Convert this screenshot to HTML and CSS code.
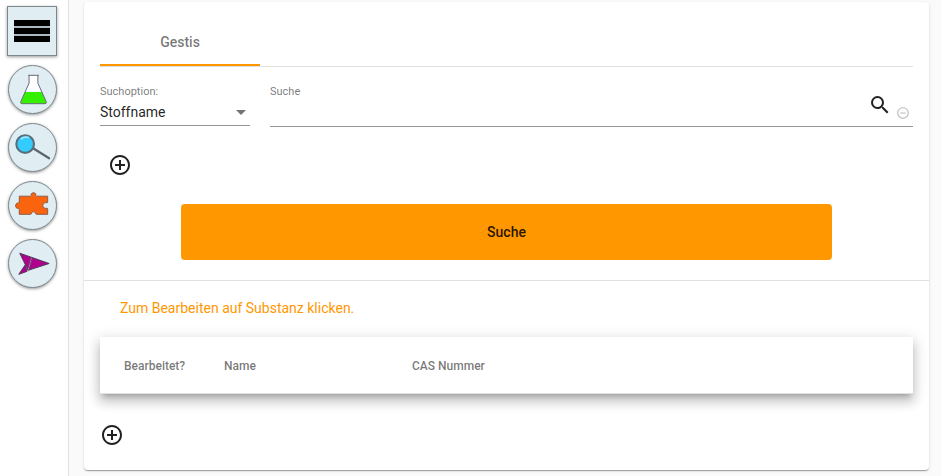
FILE: index.html
```html
<!DOCTYPE html>
<html lang="de">
<head>
<meta charset="utf-8">
<meta name="viewport" content="width=device-width, initial-scale=1">
<title>Gestis</title>
<link rel="stylesheet" href="styles.css">
</head>
<body>
<nav class="sidebar" aria-label="Navigation">
  <button class="nav-button nav-menu" type="button" aria-label="Menü">
    <svg viewBox="0 0 48 48"><path fill="#a9b9bf" d="M6 13h36v22H6z"/><path d="M6 13h36v6H6zM6 21h36v6H6zM6 29h36v6H6z"/></svg>
  </button>
  <button class="nav-button" type="button" aria-label="Substanzen">
    <svg viewBox="0 0 48 48"><path fill="#fff" d="M20.500 9.500h9v8l3.500 8.500H17l3.500-8.500z"/><path fill="#33f000" d="M16.500 26.500h17l4.500 10q.5 2-1.500 2h-23q-2 0-1.500-2z"/><path fill="none" stroke="#667" d="M19.500 9.500h11M20.500 9.500v8l-8.500 19q-.5 2 1.500 2h23q2 0 1.500-2l-8.500-19v-8"/></svg>
  </button>
  <button class="nav-button" type="button" aria-label="Suchen">
    <svg viewBox="0 0 48 48"><path stroke="#59656a" stroke-width="2.200" stroke-linecap="round" d="M25 25 41 35"/><circle cx="16.500" cy="20.500" r="9" fill="#3cf" stroke="#59707c" stroke-width="2.200"/><path fill="none" stroke="#a5e9ff" stroke-width="1.500" d="M12 15.500q4-3.500 8.500-1.500"/></svg>
  </button>
  <button class="nav-button" type="button" aria-label="Erweiterungen">
    <svg viewBox="0 0 48 48"><path fill="#fa640f" stroke="#8a5b42" d="M10.500 14.500h11.500q1.500-.5.500-2a2.800 2.800 0 0 1 5 0q-1 1.500.5 2h11.500v6q-.5 1.500-2 .500a3 3 0 0 0 0 6q1.500-1 2 .500v5.500H28q-1.500-.5-1-1.500a2.500 2.500 0 0 0-4 0q.5 1-1 1.500H10.500v-5.500q-.5-1-2-.500a3 3 0 0 1 0-5.500q1.500.5 2-1z"/></svg>
  </button>
  <button class="nav-button" type="button" aria-label="Senden">
    <svg viewBox="0 0 48 48"><path fill="#b0008e" stroke="#4b3855" stroke-linejoin="round" d="M11 13.500 41 24 19.500 31zM16.500 25.500 10 35l8.500-3z"/><path stroke="#d06bbd" stroke-width="1" d="m23 18.500-3.500 12.500"/><path stroke="#604060" stroke-width=".8" d="m24 18.500-3.500 12.500M22 18l-3.500 12.500"/></svg>
  </button>
</nav>
<main class="content">
  <div class="card">
    <form class="search-form">
      <div class="tabs" role="tablist">
        <button class="tab" type="button" role="tab" aria-selected="true">Gestis</button>
      </div>
      <div class="fields">
        <div class="field field-option">
          <label for="option">Suchoption:</label>
          <select id="option"><option>Stoffname</option></select>
        </div>
        <div class="field field-query">
          <label for="query">Suche</label>
          <div class="query-row">
            <input id="query" type="text">
            <button class="icon-button query-search" type="submit" aria-label="Suchen"><svg viewBox="0 0 24 24"><path d="M15.500 14h-.79l-.28-.27A6.470 6.470 0 0 0 16 9.500 6.500 6.500 0 1 0 9.500 16c1.610 0 3.090-.59 4.230-1.570l.27.28v.79l5 4.990L20.490 19l-4.990-5zm-6 0C7.010 14 5 11.990 5 9.500S7.010 5 9.500 5 14 7.010 14 9.500 11.990 14 9.500 14z"/></svg></button>
            <button class="icon-button query-remove" type="button" aria-label="Entfernen"><svg viewBox="0 0 24 24"><path d="M7 11v2h10v-2H7zm5-9C6.480 2 2 6.480 2 12s4.480 10 10 10 10-4.480 10-10S17.520 2 12 2zm0 18c-4.410 0-8-3.590-8-8s3.590-8 8-8 8 3.590 8 8-3.590 8-8 8z"/></svg></button>
          </div>
        </div>
      </div>
      <button class="icon-button add-option" type="button" aria-label="Suchoption hinzufügen"><svg viewBox="0 0 24 24"><path d="M13 7h-2v4H7v2h4v4h2v-4h4v-2h-4V7zm-1-5C6.480 2 2 6.480 2 12s4.480 10 10 10 10-4.480 10-10S17.520 2 12 2zm0 18c-4.410 0-8-3.590-8-8s3.590-8 8-8 8 3.590 8 8-3.590 8-8 8z"/></svg></button>
      <button class="submit" type="submit">Suche</button>
    </form>
    <section class="results">
      <p class="hint">Zum Bearbeiten auf Substanz klicken.</p>
      <table class="substances">
        <thead>
          <tr><th class="col-edited" scope="col">Bearbeitet?</th><th class="col-name" scope="col">Name</th><th scope="col">CAS Nummer</th></tr>
        </thead>
      </table>
      <button class="icon-button" type="button" aria-label="Substanz hinzufügen"><svg viewBox="0 0 24 24"><path d="M13 7h-2v4H7v2h4v4h2v-4h4v-2h-4V7zm-1-5C6.480 2 2 6.480 2 12s4.480 10 10 10 10-4.480 10-10S17.520 2 12 2zm0 18c-4.410 0-8-3.590-8-8s3.590-8 8-8 8 3.590 8 8-3.590 8-8 8z"/></svg></button>
    </section>
  </div>
</main>
</body>
</html>
```
FILE: styles.css
```css
* {
  box-sizing: border-box;
}

body {
  margin: 0;
  min-height: 100vh;
  display: flex;
  background: #fafafa;
  color: rgba(0, 0, 0, 0.87);
  font: 14px/20px Roboto, sans-serif;
}

button,
input,
select {
  font: inherit;
  color: inherit;
  border: 0;
  padding: 0;
  background: none;
}

svg {
  display: block;
  width: 100%;
  height: 100%;
}

.sidebar {
  flex: none;
  display: flex;
  flex-direction: column;
  align-items: center;
  gap: 9px;
  padding: 6px 11px 6px 7px;
  background: #fff;
  border-right: 1px solid #e0e0e0;
}

.nav-button {
  width: 49px;
  height: 49px;
  border: 1px solid #7d888c;
  border-radius: 50%;
  background: #e0eef4;
  box-shadow: 0 1px 3px rgba(0, 0, 0, 0.4);
}

.nav-menu {
  width: 50px;
  height: 50px;
  border-radius: 0;
}

.content {
  flex: 1;
  min-width: 0;
  padding: 2px 12px 6px 15px;
}

.card {
  background: #fff;
  border-radius: 4px;
  box-shadow: 0 2px 1px -1px rgba(0, 0, 0, 0.2), 0 1px 1px rgba(0, 0, 0, 0.14), 0 1px 3px rgba(0, 0, 0, 0.12);
}

.search-form {
  padding: 16px 16px 20px;
  border-bottom: 1px solid #e0e0e0;
}

.tabs {
  display: flex;
  border-bottom: 1px solid #e0e0e0;
}

.tab {
  width: 160px;
  height: 48px;
  box-shadow: inset 0 -2px #ff9800;
  color: rgba(0, 0, 0, 0.54);
  font-weight: 500;
}

.fields {
  display: flex;
  align-items: flex-start;
  gap: 20px;
  padding-top: 19px;
}

.field {
  display: flex;
  flex-direction: column;
  border-bottom: 1px solid #949494;
}

.field label {
  color: rgba(0, 0, 0, 0.54);
  font-size: 11px;
  line-height: 12px;
}

.field-option {
  position: relative;
  width: 150px;
}

.field-option select {
  height: 27px;
  appearance: none;
}

.field-option::after {
  content: "";
  position: absolute;
  right: 4px;
  bottom: 10px;
  border: 5px solid transparent;
  border-top-color: #757575;
  border-bottom: 0;
  pointer-events: none;
}

.field-query {
  flex: 1;
}

.query-row {
  display: flex;
  align-items: flex-start;
  height: 28px;
}

.query-row input {
  flex: 1;
  min-width: 0;
  height: 28px;
  outline: 0;
}

.icon-button {
  display: block;
  width: 24px;
  height: 24px;
  fill: rgba(0, 0, 0, 0.87);
}

.query-search {
  margin-top: -5px;
}

.query-remove {
  width: 14px;
  height: 14px;
  margin: 8px 3px 0 4px;
  fill: #bdbdbd;
}

.add-option {
  margin: 26px 8px 27px;
}

.submit {
  display: block;
  width: 80%;
  height: 56px;
  margin: 0 auto;
  border-radius: 4px;
  background: #ff9800;
  font-weight: 500;
}

.results {
  padding: 17px 16px 23px;
}

.hint {
  margin: 0 20px 19px;
  color: #ff9800;
}

.substances {
  width: 100%;
  margin-bottom: 29px;
  border-spacing: 0;
  table-layout: fixed;
  background: #fff;
  box-shadow: 0 5px 5px -3px rgba(0, 0, 0, 0.2), 0 8px 10px 1px rgba(0, 0, 0, 0.14), 0 3px 14px 2px rgba(0, 0, 0, 0.12);
}

.substances th {
  height: 57px;
  padding: 2px 0 0;
  border-bottom: 1px solid #e0e0e0;
  color: rgba(0, 0, 0, 0.54);
  font-size: 12px;
  font-weight: 500;
  text-align: left;
}

.substances .col-edited {
  width: 124px;
  padding-left: 24px;
}

.substances .col-name {
  width: 188px;
}
```
